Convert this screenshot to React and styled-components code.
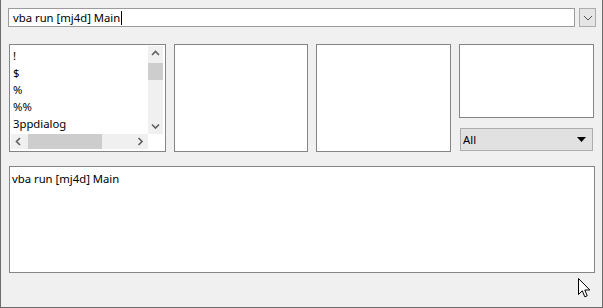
import styled, { createGlobalStyle } from "styled-components";

const GlobalStyle = createGlobalStyle`
  html, body {
    margin: 0;
    padding: 0;
    background: #f0f0f0;
  }
  body {
    font-family: "Noto Sans", "Open Sans", sans-serif;
    font-size: 11.3px;
    color: #000;
  }
`;

const items = ["!", "$", "%", "%%", "3ppdialog"];

const Chevron = ({ dir }) => {
  const pts = {
    up: "1,5 4.5,1.5 8,5",
    down: "1,1.5 4.5,5 8,1.5",
    left: "5,1 1.5,4.5 5,8",
    right: "1.5,1 5,4.5 1.5,8",
  }[dir];
  const vertical = dir === "up" || dir === "down";
  return (
    <svg width={vertical ? 9 : 7} height={vertical ? 7 : 9} viewBox={vertical ? "0 0 9 7" : "0 0 7 9"}>
      <polyline points={pts} fill="none" stroke="#606060" strokeWidth="1.6" />
    </svg>
  );
};

const App = () => {
  return (
    <>
      <GlobalStyle />
      <Frame>
        <CommandRow>
          <CommandInput>
            vba run [mj4d] Main
            <Caret />
          </CommandInput>
          <DropButton>
            <svg width="10" height="6" viewBox="0 0 10 6">
              <polyline points="1,1 5,5 9,1" fill="none" stroke="#555" strokeWidth="1" />
            </svg>
          </DropButton>
        </CommandRow>

        <PanelRow>
          <ListBox>
            <ListInner>
              <ListItems>
                {items.map((it) => (
                  <ListItem key={it}>{it}</ListItem>
                ))}
              </ListItems>
              <VScroll>
                <ArrowBtn>
                  <Chevron dir="up" />
                </ArrowBtn>
                <VTrack>
                  <VThumb />
                </VTrack>
                <ArrowBtn>
                  <Chevron dir="down" />
                </ArrowBtn>
              </VScroll>
              <HScroll>
                <ArrowBtn>
                  <Chevron dir="left" />
                </ArrowBtn>
                <HTrack>
                  <HThumb />
                </HTrack>
                <ArrowBtn>
                  <Chevron dir="right" />
                </ArrowBtn>
              </HScroll>
              <Corner />
            </ListInner>
          </ListBox>
          <Panel $width={134} />
          <Panel $width={135} />
          <SideColumn>
            <Panel $width={135} $height={74} />
            <Combo>
              <span>All</span>
              <svg width="9" height="5" viewBox="0 0 9 5">
                <polygon points="0,0 9,0 4.5,5" fill="#000" />
              </svg>
            </Combo>
          </SideColumn>
        </PanelRow>

        <Output>vba run [mj4d] Main</Output>

        <Pointer width="13" height="21" viewBox="0 0 13 21">
          <path
            d="M0.5 0.5 L0.5 16.5 L4.3 12.8 L6.8 18.8 L9.2 17.8 L6.8 12 L11.8 12 Z"
            fill="#fff"
            stroke="#000"
            strokeWidth="1"
            strokeLinejoin="miter"
          />
        </Pointer>
      </Frame>
    </>
  );
};

export default App;

const Frame = styled.div`
  position: relative;
  width: 603px;
  height: 308px;
  box-sizing: border-box;
  border-left: 1px solid #6b6b6b;
  border-right: 1px solid #6b6b6b;
  border-bottom: 1px solid #6b6b6b;
  padding: 8px 7px 0 8px;
  display: flex;
  flex-direction: column;
  overflow: hidden;
`;

const CommandRow = styled.div`
  display: flex;
  gap: 4px;
  height: 19px;
  margin-left: -1px;
  margin-right: -1px;
`;

const CommandInput = styled.div`
  flex: 1;
  box-sizing: border-box;
  background: #fff;
  border: 1px solid #9b9b9b;
  padding: 0 4px;
  line-height: 16px;
  white-space: nowrap;
  display: flex;
  align-items: center;
`;

const Caret = styled.span`
  display: inline-block;
  width: 1px;
  height: 14px;
  background: #000;
  margin-left: 1px;
`;

const DropButton = styled.div`
  width: 17px;
  box-sizing: border-box;
  background: #e5e5e5;
  border: 1px solid #acacac;
  display: flex;
  align-items: center;
  justify-content: center;
`;

const PanelRow = styled.div`
  display: flex;
  gap: 8px;
  height: 108px;
  margin-top: 17px;
`;

const ListBox = styled.div`
  width: 157px;
  box-sizing: border-box;
  border: 1px solid #858585;
  background: #fff;
  padding: 1px 2px 2px 1px;
`;

const ListInner = styled.div`
  height: 100%;
  display: grid;
  grid-template-columns: 1fr 15px;
  grid-template-rows: 1fr 15px;
`;

const ListItems = styled.div`
  padding: 1px 0 0 2px;
  overflow: hidden;
`;

const ListItem = styled.div`
  height: 17px;
  line-height: 17px;
  white-space: nowrap;
`;

const VScroll = styled.div`
  background: #f0f0f0;
  display: flex;
  flex-direction: column;
`;

const ArrowBtn = styled.div`
  width: 15px;
  height: 15px;
  flex: none;
  display: flex;
  align-items: center;
  justify-content: center;
`;

const VTrack = styled.div`
  flex: 1;
  padding-top: 2px;
`;

const VThumb = styled.div`
  height: 17px;
  background: #cdcdcd;
`;

const HScroll = styled.div`
  background: #f0f0f0;
  display: flex;
`;

const HTrack = styled.div`
  flex: 1;
  padding-left: 2px;
  display: flex;
`;

const HThumb = styled.div`
  width: 74px;
  background: #cdcdcd;
`;

const Corner = styled.div`
  background: #fff;
`;

const Panel = styled.div`
  width: ${(p) => p.$width}px;
  height: ${(p) => (p.$height ? `${p.$height}px` : "auto")};
  box-sizing: border-box;
  border: 1px solid #858585;
  background: #fff;
`;

const SideColumn = styled.div`
  display: flex;
  flex-direction: column;
  gap: 10px;
`;

const Combo = styled.div`
  height: 23px;
  margin: 0 1px;
  box-sizing: border-box;
  background: #e1e1e1;
  border: 1px solid #adadad;
  display: flex;
  align-items: center;
  justify-content: space-between;
  padding: 0 6px 0 2px;
`;

const Output = styled.div`
  margin-top: 14px;
  height: 107px;
  box-sizing: border-box;
  background: #fff;
  border: 1px solid #858585;
  padding: 3px 2px;
  line-height: 17px;
`;

const Pointer = styled.svg`
  position: absolute;
  left: 577px;
  top: 278px;
`;
